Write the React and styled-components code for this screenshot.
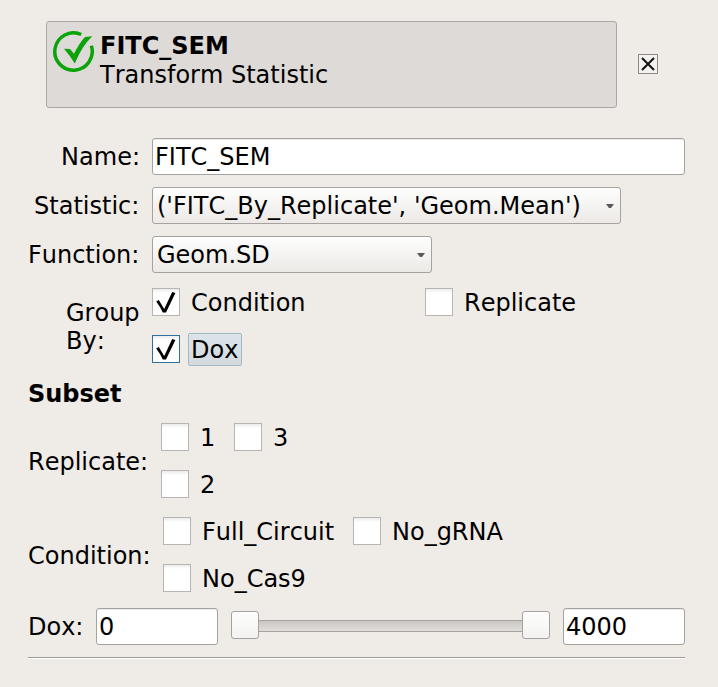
import React from "react";
import styled, { createGlobalStyle } from "styled-components";

const GlobalStyle = createGlobalStyle`
  * { box-sizing: border-box; }
  body {
    margin: 0;
    background: #efebe7;
    color: #000;
    font: 24px/28px "DejaVu Sans", sans-serif;
    font-kerning: none;
  }
`;

const Panel = styled.main`
  width: 718px;
  height: 687px;
  padding: 21px 33px 0 28px;
  background: #efebe7;
  white-space: nowrap;
`;

const Header = styled.header`
  display: flex;
  align-items: center;
  gap: 21px;
  padding-left: 18px;
  margin-bottom: 30px;
`;

const HeaderCard = styled.section`
  display: flex;
  gap: 6px;
  width: 571px;
  height: 87px;
  padding: 9px 6px;
  border: 1px solid #aaa7a4;
  border-radius: 3px;
  background: #dedad7;
`;

const StatusIcon = styled.svg`
  width: 41px;
  height: 41px;
`;

const HeaderText = styled.div`
  display: grid;
  align-content: start;
  row-gap: 1px;
  padding-top: 1px;
`;

const Title = styled.strong`
  font-weight: bold;
`;

const CloseButton = styled.button`
  display: flex;
  width: 20px;
  height: 20px;
  margin-top: -1px;
  padding: 0;
  border: 1px solid #8d8a87;
  background: #f3f0ed;
`;

const FormRow = styled.div`
  display: grid;
  grid-template-columns: 112px 1fr;
  column-gap: 12px;
  align-items: center;
  margin-bottom: 12px;
`;

const FormLabel = styled.label`
  justify-self: end;
  white-space: ${(p) => (p.$wrap ? "normal" : "nowrap")};
  width: ${(p) => (p.$wrap ? "74px" : "auto")};
  padding-top: ${(p) => (p.$wrap ? "2px" : "0")};
  margin-right: ${(p) => (p.$wrap || p.$flush ? "0" : "0.6px")};
`;

const TextField = styled.input`
  display: block;
  width: ${(p) => p.$width}px;
  height: 37px;
  padding: 0 2px;
  border: 1px solid #a5a29f;
  border-radius: 3px;
  outline: none;
  background: #fff;
  box-shadow: inset 0 1px 0 #ececeb;
  color: #000;
  font: inherit;
  font-kerning: none;
`;

const ComboBox = styled.button`
  display: flex;
  align-items: center;
  justify-content: space-between;
  width: ${(p) => p.$width}px;
  height: 37px;
  padding: 0 6px 0 4px;
  border: 1px solid #a5a29f;
  border-radius: 3px;
  background: linear-gradient(#fefefe, #ece9e6);
  color: #000;
  font: inherit;
  font-kerning: none;
`;

const ComboArrow = styled.svg`
  width: 8px;
  height: 4px;
  margin-top: 1px;
`;

const CheckGrid = styled.div`
  display: grid;
  grid-template-columns: ${(p) => p.$columns};
  grid-auto-rows: 28px;
  row-gap: 19px;
`;

const GroupRow = styled(FormRow)`
  margin: 15px 0 17px;
`;

const SubsetRow = styled.div`
  display: flex;
  align-items: center;
  margin-bottom: 19px;
`;

const SubsetLabel = styled.span`
  width: ${(p) => p.$width}px;
  padding-top: ${(p) => (p.$tall ? "2px" : "0")};
`;

const CheckItem = styled.div`
  display: flex;
  align-items: center;
  gap: 8px;
`;

const CheckSquare = styled.span`
  display: block;
  flex: none;
  width: 28px;
  height: 28px;
  border: 1px solid ${(p) => (p.$focused ? "#2d71a0" : "#b7b4b1")};
  background: linear-gradient(#ebebeb, #fff 4px);
`;

const CheckLabel = styled.span`
  height: 33px;
  padding: 2px 3px 2px 2px;
  border: 1px solid ${(p) => (p.$focused ? "#a3b8c5" : "transparent")};
  border-radius: 2px;
  background: ${(p) => (p.$focused ? "linear-gradient(#dbe4e9, #d3dbdf)" : "none")};
`;

const SectionTitle = styled.h2`
  margin: 0 0 15px;
  font: bold 24px/28px "DejaVu Sans", sans-serif;
  font-kerning: none;
`;

const RangeRow = styled.div`
  display: flex;
  align-items: center;
  height: 37px;
  margin-top: -3px;
`;

const RangeSlider = styled.div`
  display: flex;
  align-self: flex-start;
  align-items: center;
  width: 319px;
  height: 28px;
  margin: 3px 13px 0;
`;

const Handle = styled.span`
  flex: none;
  width: 28px;
  height: 28px;
  border: 1px solid #a5a29f;
  border-radius: 3px;
  background: linear-gradient(#fefefe, #f3f2f0);
`;

const Groove = styled.span`
  flex: 1;
  height: 12px;
  margin-top: 2px;
  border: solid #a5a29f;
  border-width: 1px 0;
  background: linear-gradient(#c9c6c3, #e2dfdb);
`;

const Separator = styled.hr`
  height: 2px;
  margin: 12px 0 0;
  border: 0;
  border-top: 1px solid #9d9c98;
  background: #fff;
`;

function Check({ label, checked, focused }) {
  return (
    <CheckItem role="checkbox" aria-checked={!!checked} aria-label={label}>
      <CheckSquare $focused={focused}>
        {checked && (
          <svg width="26" height="26" viewBox="0 0 26 26" aria-hidden="true">
            <path d="M3.2 12.6L5.8 11L11.2 20L19.2 3L22.4 4L13 23.6H9.8Q7 17.5 3.2 12.6Z" fill="#000" />
          </svg>
        )}
      </CheckSquare>
      <CheckLabel $focused={focused}>{label}</CheckLabel>
    </CheckItem>
  );
}

function Combo({ width, value }) {
  return (
    <ComboBox $width={width}>
      <span>{value}</span>
      <ComboArrow viewBox="0 0 8 4" aria-hidden="true">
        <path d="M0 0H8L5 4H3Z" fill="#5b5957" />
      </ComboArrow>
    </ComboBox>
  );
}

export default function App() {
  return (
    <>
      <GlobalStyle />
      <Panel>
        <Header>
          <HeaderCard>
            <StatusIcon viewBox="0 0 41 41" aria-hidden="true">
              <path d="M28.2 3.5 A18.7 18.7 0 1 0 38.3 14.8" fill="none" stroke="#0aa30a" strokeWidth="3.5" />
              <path d="M11 17.7L17 18.1L21 22.7Q26.5 11.5 32 5.9L39.3 5.3Q29 15 21.8 32.5Q16.5 24 11 17.7Z" fill="#0aa30a" />
            </StatusIcon>
            <HeaderText>
              <Title>FITC_SEM</Title>
              <span>Transform Statistic</span>
            </HeaderText>
          </HeaderCard>
          <CloseButton aria-label="Remove">
            <svg width="18" height="18" viewBox="0 0 18 18" aria-hidden="true">
              <path d="M3 3L15 15M15 3L3 15" stroke="#111" strokeWidth="2" />
            </svg>
          </CloseButton>
        </Header>

        <FormRow>
          <FormLabel $flush>Name:</FormLabel>
          <TextField $width={533} defaultValue="FITC_SEM" />
        </FormRow>
        <FormRow>
          <FormLabel>Statistic:</FormLabel>
          <Combo width={469} value="('FITC_By_Replicate', 'Geom.Mean')" />
        </FormRow>
        <FormRow>
          <FormLabel>Function:</FormLabel>
          <Combo width={280} value="Geom.SD" />
        </FormRow>
        <GroupRow>
          <FormLabel $wrap>Group By:</FormLabel>
          <CheckGrid $columns="273px 1fr">
            <Check label="Condition" checked />
            <Check label="Replicate" />
            <Check label="Dox" checked focused />
          </CheckGrid>
        </GroupRow>

        <SectionTitle>Subset</SectionTitle>
        <SubsetRow>
          <SubsetLabel $width={133} $tall>Replicate:</SubsetLabel>
          <CheckGrid $columns="73px 1fr">
            <Check label="1" />
            <Check label="3" />
            <Check label="2" />
          </CheckGrid>
        </SubsetRow>
        <SubsetRow>
          <SubsetLabel $width={135} $tall>Condition:</SubsetLabel>
          <CheckGrid $columns="190px 1fr">
            <Check label="Full_Circuit" />
            <Check label="No_gRNA" />
            <Check label="No_Cas9" />
          </CheckGrid>
        </SubsetRow>
        <RangeRow>
          <SubsetLabel $width={68}>Dox:</SubsetLabel>
          <TextField $width={122} defaultValue="0" />
          <RangeSlider>
            <Handle />
            <Groove />
            <Handle />
          </RangeSlider>
          <TextField $width={122} defaultValue="4000" />
        </RangeRow>
        <Separator />
      </Panel>
    </>
  );
}
